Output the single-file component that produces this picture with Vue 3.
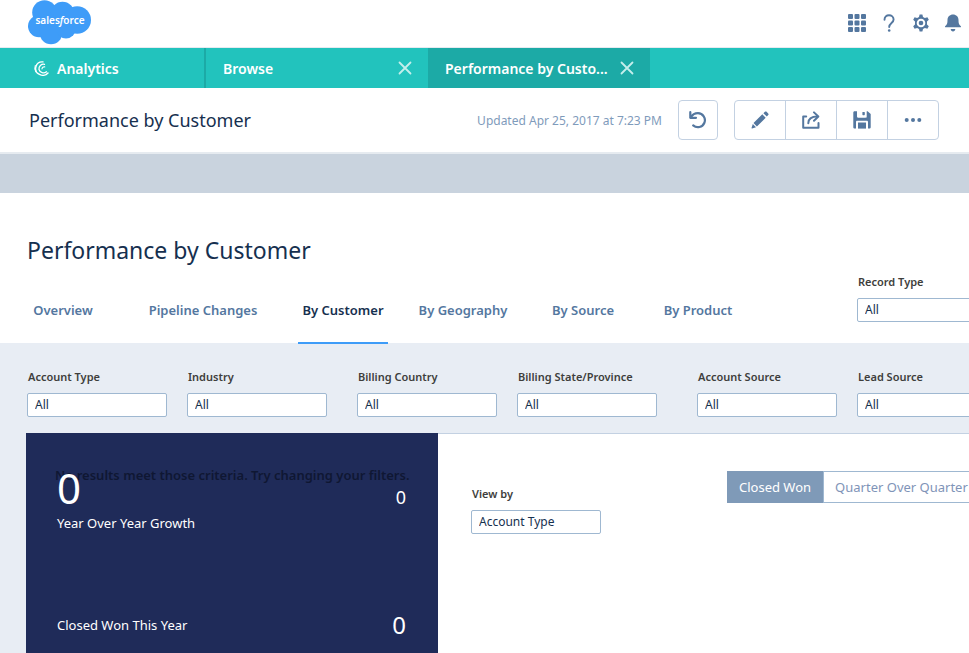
<script setup>
import { ref } from 'vue'

const views = ['Overview', 'Pipeline Changes', 'By Customer', 'By Geography', 'By Source', 'By Product']
const activeView = ref('By Customer')

const filterGroups = [
  [
    { id: 'account-type', label: 'Account Type' },
    { id: 'industry', label: 'Industry' }
  ],
  [
    { id: 'billing-country', label: 'Billing Country' },
    { id: 'billing-state', label: 'Billing State/Province' }
  ],
  [
    { id: 'account-source', label: 'Account Source' },
    { id: 'lead-source', label: 'Lead Source' }
  ]
]

const modes = ['Closed Won', 'Quarter Over Quarter']
const mode = ref('Closed Won')
</script>

<template>
  <div class="app">
    <header class="global">
      <a class="logo" href="#" aria-label="salesforce">
        <svg width="64" height="45" viewBox="0 0 64 45">
          <g fill="#3e9cf8">
            <circle cx="16.500" cy="12.500" r="12.300" />
            <circle cx="34.500" cy="13.500" r="11.800" />
            <circle cx="49.200" cy="20" r="13.800" />
            <circle cx="11" cy="26.300" r="11" />
            <circle cx="23" cy="33" r="11.300" />
            <circle cx="38" cy="28.500" r="10" />
            <path d="M10 14H50V32H12Z" />
          </g>
          <text class="logo-text" x="32" y="24" text-anchor="middle">sales<tspan font-style="italic">f</tspan>orce</text>
        </svg>
      </a>
      <nav class="global-icons">
        <button aria-label="App launcher">
          <svg width="18" height="18" viewBox="0 0 18 18">
            <g fill="currentColor">
              <rect x="0" y="0" width="5" height="5" rx="1" /><rect x="6.500" y="0" width="5" height="5" rx="1" /><rect x="13" y="0" width="5" height="5" rx="1" />
              <rect x="0" y="6.500" width="5" height="5" rx="1" /><rect x="6.500" y="6.500" width="5" height="5" rx="1" /><rect x="13" y="6.500" width="5" height="5" rx="1" />
              <rect x="0" y="13" width="5" height="5" rx="1" /><rect x="6.500" y="13" width="5" height="5" rx="1" /><rect x="13" y="13" width="5" height="5" rx="1" />
            </g>
          </svg>
        </button>
        <button aria-label="Help">
          <svg width="18" height="18" viewBox="0 0 18 18">
            <path d="M4.500 5.800C4.500 2.800 6.500 1.200 9 1.200s4.600 1.700 4.600 4.300C13.600 9 9.200 9 9.200 13" fill="none" stroke="currentColor" stroke-width="1.900" stroke-linecap="round" />
            <circle cx="9.200" cy="16.500" r="1.300" fill="currentColor" />
          </svg>
        </button>
        <button aria-label="Setup">
          <svg width="18" height="18" viewBox="0 0 18 18">
            <path fill="currentColor" fill-rule="evenodd" d="M7.600 0.500h2.800l.6 2.500 1.900 1.100 2.500-.8 1.400 2.500-1.800 1.800v2.800l1.800 1.800-1.400 2.500-2.500-.8-1.900 1.100-.6 2.500H7.600L7 15l-1.900-1.100-2.500.8-1.400-2.500L3 10.400V7.600L1.200 5.800l1.400-2.500 2.500.8L7 3zM9 4.700a4.300 4.300 0 1 0 0 8.600 4.300 4.300 0 0 0 0-8.600z" />
            <circle cx="9" cy="9" r="2.300" fill="currentColor" />
          </svg>
        </button>
        <button aria-label="Notifications">
          <svg width="18" height="18" viewBox="0 0 18 18">
            <path fill="currentColor" d="M9 .5c3.200 0 5.500 2.300 5.500 5.500 0 3.400.5 4.600 2.200 6 .6.500.4 1.300-.5 1.300H1.800c-.9 0-1.100-.8-.5-1.300 1.700-1.400 2.200-2.600 2.200-6C3.500 2.800 5.800.5 9 .5zM6.700 15h4.600c0 1.400-1 2.500-2.300 2.500S6.700 16.400 6.700 15z" />
          </svg>
        </button>
      </nav>
    </header>

    <nav class="tabs">
      <a class="tab home" href="#">
        <svg width="15" height="15" viewBox="0 0 15 15" fill="none" stroke="#fff" stroke-linecap="round">
          <path d="M9 .9A6.600 6.600 0 0 0 5 13.200A7 7 0 0 0 14 12" stroke-width="1.400" />
          <path d="M1.200 4.500A7 7 0 0 0 1.800 11" stroke-width="1" />
          <path d="M10.500 3.300A4.600 4.600 0 0 0 5 8.500A4.700 4.700 0 0 0 12.500 10.800" stroke-width="1.300" />
          <path d="M10.700 5.800A2.300 2.300 0 0 0 8 7.800" stroke-width="1.200" />
        </svg>
        <span>Analytics</span>
      </a>
      <div class="tab">
        <a href="#">Browse</a>
        <button aria-label="Close Browse">
          <svg width="14" height="14" viewBox="0 0 14 14"><path d="M1.500 1.500l11 11M12.500 1.500l-11 11" stroke="currentColor" stroke-width="1.800" stroke-linecap="round" /></svg>
        </button>
      </div>
      <div class="tab current">
        <a href="#">Performance by Custo...</a>
        <button aria-label="Close Performance by Customer">
          <svg width="14" height="14" viewBox="0 0 14 14"><path d="M1.500 1.500l11 11M12.500 1.500l-11 11" stroke="currentColor" stroke-width="1.800" stroke-linecap="round" /></svg>
        </button>
      </div>
    </nav>

    <div class="toolbar">
      <h1>Performance by Customer</h1>
      <span class="updated">Updated Apr 25, 2017 at 7:23 PM</span>
      <div class="group undo">
        <button aria-label="Reset">
          <svg width="18" height="18" viewBox="0 0 18 18" fill="none" stroke="currentColor" stroke-width="2.200" stroke-linecap="round" stroke-linejoin="round">
            <path d="M2 6.200C3.500 3.500 6 2.200 9 2.200a7 7 0 1 1-4.800 12.200" />
            <path d="M1.300 1.200V6.800H7" />
          </svg>
        </button>
      </div>
      <div class="group">
        <button aria-label="Edit">
          <svg width="18" height="18" viewBox="0 0 18 18" fill="currentColor">
            <path d="M11.300 3.300l3.400 3.400-8.800 8.800-3.400-3.400zM12.400 2.200L13.900.8c.5-.5 1.200-.5 1.700 0l1.600 1.600c.5.500.5 1.200 0 1.700l-1.400 1.500zM1.800 13l3.200 3.200-3.900 1.300c-.4.100-.7-.2-.6-.6z" />
          </svg>
        </button>
        <button aria-label="Share">
          <svg width="18" height="18" viewBox="0 0 18 18" fill="none" stroke="currentColor" stroke-width="2" stroke-linecap="round" stroke-linejoin="round">
            <path d="M4.200 5.500H1.200V16.800H16.500V12" />
            <path d="M6.300 12.300C6.300 8 9 5.500 15.500 5.500" />
            <path d="M12 1.400l4.300 4.100-4.300 4.300" />
          </svg>
        </button>
        <button aria-label="Save">
          <svg width="18" height="18" viewBox="0 0 18 18" fill="currentColor">
            <path d="M1.500 0.300H4V5.500c0 .8.500 1.200 1.200 1.200h7.300c.7 0 1.200-.4 1.200-1.200V.3h.9L17.700 3v13.200c0 .8-.6 1.400-1.400 1.400H15V11c0-.8-.5-1.300-1.300-1.300H4.300C3.500 9.700 3 10.200 3 11v6.600H1.700c-.8 0-1.400-.6-1.400-1.400V1.700C.3.900.8.300 1.500.3z" />
            <rect x="9.400" y="1" width="2.400" height="3.200" rx=".6" />
            <path d="M5 11.500h8v6.100H5z" />
          </svg>
        </button>
        <button aria-label="More actions">
          <svg width="18" height="18" viewBox="0 0 18 18" fill="currentColor">
            <circle cx="2.700" cy="9" r="2" /><circle cx="9" cy="9" r="2" /><circle cx="15.300" cy="9" r="2" />
          </svg>
        </button>
      </div>
    </div>

    <div class="band"></div>

    <main class="dashboard">
      <section class="heading">
        <div class="heading-main">
          <h2>Performance by Customer</h2>
          <div class="views">
            <button v-for="view in views" :key="view" :class="{ active: view === activeView }" @click="activeView = view">{{ view }}</button>
          </div>
        </div>
        <div class="field">
          <label for="record-type">Record Type</label>
          <select id="record-type"><option>All</option></select>
        </div>
      </section>

      <section class="filters">
        <div v-for="(group, index) in filterGroups" :key="index" class="pair">
          <div v-for="filter in group" :key="filter.id" class="field">
            <label :for="filter.id">{{ filter.label }}</label>
            <select :id="filter.id"><option>All</option></select>
          </div>
        </div>
      </section>

      <section class="content">
        <div class="summary">
          <p class="empty">No results meet those criteria. Try changing your filters.</p>
          <div class="row">
            <span class="big">0</span>
            <span class="small">0</span>
          </div>
          <p class="caption">Year Over Year Growth</p>
          <div class="row closed">
            <span class="caption">Closed Won This Year</span>
            <span class="medium">0</span>
          </div>
        </div>
        <div class="chart">
          <div class="field view-by">
            <label for="view-by">View by</label>
            <select id="view-by"><option>Account Type</option></select>
          </div>
          <div class="modes">
            <button v-for="item in modes" :key="item" :class="{ active: item === mode }" @click="mode = item">{{ item }}</button>
          </div>
        </div>
      </section>
    </main>
  </div>
</template>

<style>
body {
  margin: 0;
}
</style>

<style scoped>
.app {
  display: flex;
  flex-direction: column;
  height: 100vh;
  overflow: hidden;
  background: #fff;
  color: #16304f;
  font-family: "Noto Sans", "Open Sans", sans-serif;
  font-size: 13px;
}
.app * {
  box-sizing: border-box;
}
h1,
h2,
p {
  margin: 0;
  font-weight: 400;
}
button {
  display: flex;
  align-items: center;
  justify-content: center;
  padding: 0;
  border: 0;
  background: none;
  color: #54779f;
  font: inherit;
  white-space: nowrap;
  cursor: pointer;
}
a {
  color: inherit;
  text-decoration: none;
}
svg {
  display: block;
}

.global {
  display: flex;
  flex: none;
  justify-content: space-between;
  height: 48px;
  padding: 0 7px 0 28px;
  border-bottom: 1px solid #e6eaf0;
}
.logo-text {
  fill: #fff;
  font-size: 10px;
  font-weight: 600;
}
.global-icons {
  display: flex;
  gap: 14px;
  align-items: center;
  padding-bottom: 2px;
}

.tabs {
  display: flex;
  flex: none;
  height: 40px;
  background: #22c3bd;
  color: #fff;
  font-size: 14px;
  font-weight: 600;
}
.tab {
  display: flex;
  align-items: center;
  justify-content: space-between;
  width: 222px;
  padding: 0 16px 0 17px;
}
.tab.home {
  justify-content: flex-start;
  gap: 8px;
  width: 206px;
  padding-left: 34px;
  border-right: 2px solid #1caaa6;
}
.tab.current {
  background: #1caaa6;
}
.tab button {
  color: #c4eeec;
}

.toolbar {
  display: flex;
  flex: none;
  align-items: center;
  height: 66px;
  padding: 0 30px 0 29px;
  border-bottom: 2px solid #e6ebf0;
}
.toolbar h1 {
  flex: 1;
  font-size: 18px;
}
.updated {
  color: #7f9bbb;
  font-size: 12px;
}
.group {
  display: flex;
  margin-left: 16px;
  border: 1px solid #c3d1e2;
  border-radius: 4px;
}
.group button {
  width: 51px;
  height: 38px;
}
.group button:first-child {
  width: 50px;
}
.group button + button {
  border-left: 1px solid #c3d1e2;
}
.group.undo button {
  width: 38px;
}
.band {
  flex: none;
  height: 39px;
  background: #c9d3de;
}

.dashboard {
  display: flex;
  flex: 1;
  flex-direction: column;
  min-width: 1024px;
}
.heading {
  display: flex;
  height: 150px;
}
.heading-main {
  width: 857px;
}
h2 {
  padding: 39px 0 0 27px;
  font-size: 23px;
  line-height: 36px;
}
.views {
  position: relative;
  z-index: 1;
  display: grid;
  grid-template-columns: 120px 160px 120px 120px 120px 110px;
  justify-items: center;
  height: 76px;
  padding-left: 3px;
}
.views button {
  min-width: 90px;
  height: 76px;
  padding-top: 10px;
  border-bottom: 2px solid transparent;
  font-weight: 600;
}
.views button.active {
  border-bottom-color: #3e9cf8;
  color: #16304f;
}
.field {
  display: flex;
  flex-direction: column;
  gap: 6px;
  width: 140px;
}
.heading .field {
  padding-top: 79px;
}
.field label {
  padding-left: 1px;
  color: #3e3e3c;
  font-size: 11px;
  font-weight: 600;
  line-height: 20px;
}
select {
  width: 100%;
  height: 24px;
  padding: 0 7px 2px;
  border: 1px solid #9fb8d1;
  border-radius: 2px;
  background: #fff;
  color: #16304f;
  font: inherit;
  font-size: 12px;
  appearance: none;
}
.filters {
  display: flex;
  height: 90px;
  padding: 24px 0 0 27px;
  background: #e8edf4;
}
.pair {
  display: flex;
  gap: 20px;
}
.pair + .pair {
  margin-left: 30px;
}
.pair + .pair + .pair {
  margin-left: 40px;
}

.content {
  display: flex;
  flex: 1;
  padding-left: 26px;
  background: #e8edf4;
}
.summary {
  position: relative;
  width: 412px;
  padding: 30px 32px 0 31px;
  background: #1f2b59;
  color: #fff;
}
.empty {
  position: absolute;
  top: 32px;
  left: 29px;
  color: #0f1733;
  font-weight: 600;
  line-height: 20px;
  white-space: nowrap;
}
.row {
  position: relative;
  display: flex;
  align-items: baseline;
  justify-content: space-between;
}
.big {
  font-size: 42px;
  line-height: 50px;
}
.small {
  font-size: 18px;
}
.medium {
  font-size: 24px;
  line-height: 32px;
}
.caption {
  font-size: 13px;
  line-height: 20px;
}
.closed {
  align-items: center;
  padding-top: 76px;
}
.chart {
  display: flex;
  flex: 1;
  align-items: flex-start;
  justify-content: space-between;
  padding-left: 33px;
  border-top: 1px solid #c3d1e2;
  background: #fff;
}
.view-by {
  width: 130px;
  padding-top: 50px;
}
.modes {
  display: flex;
  flex: none;
  width: 297px;
  padding-top: 37px;
}
.modes button {
  height: 32px;
  padding: 0 11px;
  border: 1px solid #9fb8d1;
  color: #7f94b8;
}
.modes button.active {
  border-color: #7f9ab8;
  background: #7f9ab8;
  color: #fff;
}
</style>
